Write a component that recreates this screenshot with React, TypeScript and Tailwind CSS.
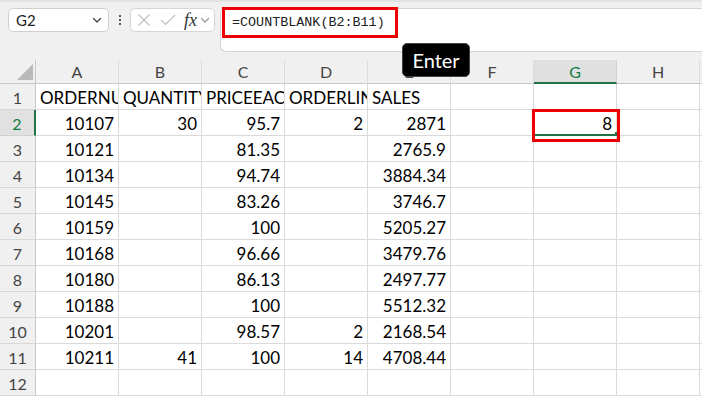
import React from "react";

const cols = ["A", "B", "C", "D", "E", "F", "G", "H"];

const data: (string | null)[][] = [
  ["ORDERNU", "QUANTITY", "PRICEEACH", "ORDERLIN", "SALES", null, null, null],
  ["10107", "30", "95.7", "2", "2871", null, "8", null],
  ["10121", null, "81.35", null, "2765.9", null, null, null],
  ["10134", null, "94.74", null, "3884.34", null, null, null],
  ["10145", null, "83.26", null, "3746.7", null, null, null],
  ["10159", null, "100", null, "5205.27", null, null, null],
  ["10168", null, "96.66", null, "3479.76", null, null, null],
  ["10180", null, "86.13", null, "2497.77", null, null, null],
  ["10188", null, "100", null, "5512.32", null, null, null],
  ["10201", null, "98.57", "2", "2168.54", null, null, null],
  ["10211", "41", "100", "14", "4708.44", null, null, null],
  [null, null, null, null, null, null, null, null],
];

function Chevron({ color }: { color: string }) {
  return (
    <svg width="12" height="12" viewBox="0 0 12 12" fill="none">
      <path d="M2.5 4.5 L6 8 L9.5 4.5" stroke={color} strokeWidth="1.3" strokeLinecap="round" strokeLinejoin="round" />
    </svg>
  );
}

export default function App() {
  return (
    <div
      className="relative w-[702px] h-[396px] overflow-hidden bg-white"
      style={{ fontFamily: "Lato, 'Open Sans', sans-serif" }}
    >
      {/* Toolbar */}
      <div className="flex h-[60px] items-start bg-[#f0f0f0] border-t-2 border-[#e2e2e2] pt-[6px]">
        <div className="ml-[8px] flex h-[24px] w-[101px] items-center justify-between rounded-[5px] border border-[#cfcfcf] bg-white pl-[7px] pr-[5px]">
          <span className="text-[15px] text-[#222]">G2</span>
          <Chevron color="#444" />
        </div>
        <div className="flex h-[24px] w-[21px] flex-col items-center justify-center gap-[2px]">
          <div className="h-[2px] w-[2px] bg-[#555]" />
          <div className="h-[2px] w-[2px] bg-[#555]" />
          <div className="h-[2px] w-[2px] bg-[#555]" />
        </div>
        <div className="flex h-[24px] w-[85px] items-center rounded-[5px] border border-[#d6d6d6] bg-white pl-[6px]">
          <svg width="14" height="14" viewBox="0 0 14 14" fill="none">
            <path d="M1.5 1.5 L12.5 12.5 M12.5 1.5 L1.5 12.5" stroke="#bdbdbd" strokeWidth="1.1" />
          </svg>
          <svg className="ml-[9px]" width="16" height="14" viewBox="0 0 16 14" fill="none">
            <path d="M1 7 L5.5 11.5 L15 2" stroke="#bdbdbd" strokeWidth="1.1" />
          </svg>
          <span
            className="ml-[8px] text-[18px] italic text-[#333] leading-none"
            style={{ fontFamily: "'Liberation Serif', serif" }}
          >
            fx
          </span>
          <span className="ml-[2px] flex items-center">
            <Chevron color="#999" />
          </span>
        </div>
        <div className="relative ml-[5px] h-[44px] flex-1 rounded-l-[6px] border border-r-0 border-[#d4d4d4] bg-white">
          <div
            className="absolute left-[11px] top-[4px] text-[13.4px] text-[#222]"
            style={{ fontFamily: "'Liberation Mono', monospace" }}
          >
            =COUNTBLANK(B2:B11)
          </div>
        </div>
      </div>

      {/* Column header row */}
      <div className="flex h-[24px] bg-[#f0f0f0]">
        <div className="relative w-[36px] shrink-0 border-b border-r border-[#c8c8c8]">
          <svg className="absolute left-[17px] top-[4px]" width="16" height="16" viewBox="0 0 16 16">
            <polygon points="16,0 16,16 0,16" fill="#b9b9b9" />
          </svg>
        </div>
        {cols.map((c) => (
          <div
            key={c}
            className={
              c === "G"
                ? "flex w-[83px] shrink-0 items-center justify-center border-b-2 border-r border-b-[#217346] border-r-[#d0d0d0] bg-[#e0e0e0] pt-[2px] text-[16px] text-[#107c41]"
                : "flex w-[83px] shrink-0 items-center justify-center border-b border-r border-b-[#c8c8c8] border-r-[#dcdcdc] text-[16px] text-[#444]"
            }
          >
            {c}
          </div>
        ))}
        <div className="flex-1 border-b border-[#c8c8c8]" />
      </div>

      {/* Data rows */}
      {data.map((row, ri) => (
        <div key={ri} className="flex h-[26px]">
          <div
            className={
              ri === 1
                ? "flex w-[36px] shrink-0 items-center justify-center border-b border-r-2 border-b-[#d0d0d0] border-r-[#217346] bg-[#e1e1e1] pt-[2px] text-[16px] text-[#107c41]"
                : "flex w-[36px] shrink-0 items-center justify-center border-b border-r border-b-[#d8d8d8] border-r-[#c8c8c8] bg-[#f0f0f0] pt-[2px] text-[16px] text-[#444]"
            }
          >
            {ri + 1}
          </div>
          {row.map((v, ci) => {
            const isText = ri === 0;
            return (
              <div
                key={ci}
                className={
                  "relative flex w-[83px] shrink-0 items-center overflow-hidden whitespace-nowrap border-b border-r border-[#dadada] pt-[3px] text-[17px] text-black " +
                  (isText ? "justify-start pl-[4px]" : "justify-end pr-[4px]")
                }
              >
                {v}
              </div>
            );
          })}
          <div className="flex-1 border-b border-[#dadada]" />
        </div>
      ))}

      {/* Red highlight around formula */}
      <div className="absolute left-[222px] top-[7px] h-[31px] w-[176px] border-[3px] border-[#ee0000]" />

      {/* Selected cell G2 underline & handle */}
      <div className="absolute left-[535px] top-[134px] h-[2px] w-[81px] bg-[#217346]" />
      <div className="absolute left-[615px] top-[132px] h-[4px] w-[3px] bg-[#217346]" />
      {/* Red box around G2 */}
      <div className="absolute left-[532px] top-[109px] h-[33px] w-[88px] border-[3px] border-[#ee0000]" />

      {/* Enter tooltip */}
      <div className="absolute left-[402px] top-[43px] flex h-[34px] w-[68px] items-center justify-center rounded-[5px] border border-[#444] bg-black text-[20px] text-white">
        Enter
      </div>
    </div>
  );
}
